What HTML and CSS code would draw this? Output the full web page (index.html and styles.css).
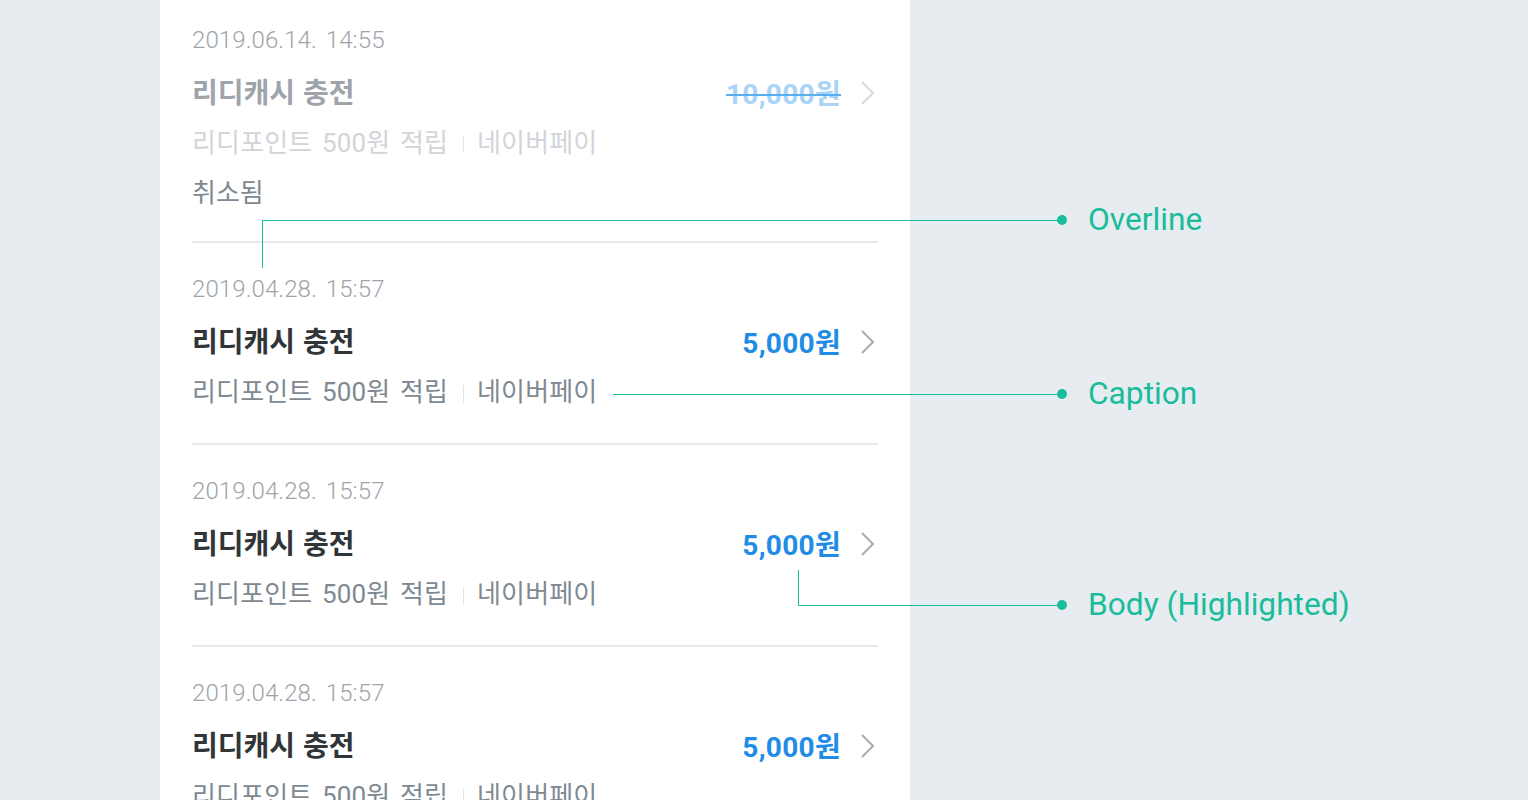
FILE: index.html
```html
<!DOCTYPE html>
<html lang="ko">
<head>
<meta charset="utf-8">
<title>리디캐시 내역</title>
<link rel="stylesheet" href="styles.css">
</head>
<body>
<div class="page">
  <main class="panel">
    <section class="item item-first item-cancelled">
      <div class="date">2019.06.14. 14:55</div>
      <div class="title-row">
        <span class="title">리디캐시 충전</span>
        <span class="amount-wrap">
          <span class="amount">10,000원</span>
          <svg class="chevron" width="16" height="24" viewBox="0 0 16 24"><path d="M2 1 L13 12 L2 23" fill="none" stroke="currentColor" stroke-width="2"/></svg>
        </span>
      </div>
      <div class="caption">리디포인트 500원 적립<span class="sep"></span>네이버페이</div>
      <div class="status">취소됨</div>
    </section>
    <section class="item">
      <div class="date">2019.04.28. 15:57</div>
      <div class="title-row">
        <span class="title">리디캐시 충전</span>
        <span class="amount-wrap">
          <span class="amount">5,000원</span>
          <svg class="chevron" width="16" height="24" viewBox="0 0 16 24"><path d="M2 1 L13 12 L2 23" fill="none" stroke="currentColor" stroke-width="2"/></svg>
        </span>
      </div>
      <div class="caption">리디포인트 500원 적립<span class="sep"></span>네이버페이</div>
    </section>
    <section class="item">
      <div class="date">2019.04.28. 15:57</div>
      <div class="title-row">
        <span class="title">리디캐시 충전</span>
        <span class="amount-wrap">
          <span class="amount">5,000원</span>
          <svg class="chevron" width="16" height="24" viewBox="0 0 16 24"><path d="M2 1 L13 12 L2 23" fill="none" stroke="currentColor" stroke-width="2"/></svg>
        </span>
      </div>
      <div class="caption">리디포인트 500원 적립<span class="sep"></span>네이버페이</div>
    </section>
    <section class="item">
      <div class="date">2019.04.28. 15:57</div>
      <div class="title-row">
        <span class="title">리디캐시 충전</span>
        <span class="amount-wrap">
          <span class="amount">5,000원</span>
          <svg class="chevron" width="16" height="24" viewBox="0 0 16 24"><path d="M2 1 L13 12 L2 23" fill="none" stroke="currentColor" stroke-width="2"/></svg>
        </span>
      </div>
      <div class="caption">리디포인트 500원 적립<span class="sep"></span>네이버페이</div>
    </section>
  </main>

  <div class="callout callout-overline">
    <span class="drop"></span>
    <span class="leader"></span><span class="dot"></span><span class="label">Overline</span>
  </div>
  <div class="callout callout-caption">
    <span class="leader"></span><span class="dot"></span><span class="label">Caption</span>
  </div>
  <div class="callout callout-body">
    <span class="rise"></span>
    <span class="leader"></span><span class="dot"></span><span class="label">Body (Highlighted)</span>
  </div>
</div>
</body>
</html>
```

FILE: styles.css
```css
* { box-sizing: border-box; }
html, body { margin: 0; padding: 0; }
body {
  background: #e7ecf0;
  font-family: Roboto, "Noto Sans CJK KR", sans-serif;
  overflow: hidden;
}
.page {
  position: relative;
  width: 1528px;
  height: 800px;
  overflow: hidden;
}
.panel {
  margin-left: 160px;
  width: 750px;
  height: 800px;
  background: #fff;
  padding: 0 32px;
}
.item {
  padding: 20px 0 25px;
  border-bottom: 2px solid #e6e8ee;
}
.item-first { padding-top: 14px; padding-bottom: 25px; }
.date {
  font-size: 24px;
  font-weight: 300;
  line-height: 52px;
  height: 52px;
  color: #9ea4aa;
  word-spacing: 3px;
  letter-spacing: 0.1px;
}
.title-row {
  display: flex;
  justify-content: space-between;
  align-items: center;
  height: 52px;
}
.title {
  font-family: "Noto Sans CJK KR", sans-serif;
  font-weight: 700;
  font-size: 28px;
  color: #303538;
  margin-top: -2px;
}
.amount-wrap {
  display: flex;
  align-items: center;
  gap: 19px;
}
.amount {
  font-family: Roboto, "Noto Sans CJK KR", sans-serif;
  font-weight: 700;
  font-size: 28px;
  letter-spacing: 0.3px;
  color: #1f8ce6;
}
.chevron { color: #a6acb2; display: block; margin-right: 2px; margin-top: 1px; }
.caption {
  display: flex;
  align-items: center;
  font-size: 26px;
  line-height: 51px;
  height: 51px;
  color: #808991;
  word-spacing: 3px;
  letter-spacing: 0.15px;
}
.sep {
  width: 1px;
  height: 18px;
  background: #dfe2e6;
  margin: 2px 13px 0 15px;
}
.status {
  font-family: "Noto Sans CJK KR", sans-serif;
  font-size: 26px;
  line-height: 46px;
  height: 48px;
  color: #808991;
}
.item-cancelled .caption { height: 50px; line-height: 50px; color: #d1d5d9; }
.item-cancelled .sep { background: #e6e8eb; }
.item-cancelled .title { color: #9ea4aa; }
.item-cancelled .amount {
  color: #a9d4f7;
  text-decoration: line-through;
  text-decoration-color: #5aaeee;
  text-decoration-thickness: 2px;
}
.item-cancelled .chevron { color: #d6dade; }

/* annotation callouts (overlay) */
.callout {
  position: absolute;
  display: flex;
  align-items: center;
  height: 0;
  color: #1abc9c;
}
.leader {
  height: 1px;
  background: #1abc9c;
}
.dot {
  width: 10px;
  height: 10px;
  border-radius: 50%;
  background: #1abc9c;
  margin-left: -5px;
  flex: none;
}
.label {
  font-family: Roboto, sans-serif;
  font-size: 31.7px;
  margin-left: 21px;
  white-space: nowrap;
  line-height: 1;
}
.drop, .rise {
  position: absolute;
  left: 0;
  width: 1px;
  background: #1abc9c;
}
.callout-overline { top: 220px; left: 262px; }
.callout-overline .leader { width: 800px; }
.callout-overline .drop { top: 0; height: 48px; }
.callout-caption { top: 394px; left: 613px; }
.callout-caption .leader { width: 449px; }
.callout-body { top: 605px; left: 798px; }
.callout-body .leader { width: 264px; }
.callout-body .rise { top: -35px; height: 36px; }
```
